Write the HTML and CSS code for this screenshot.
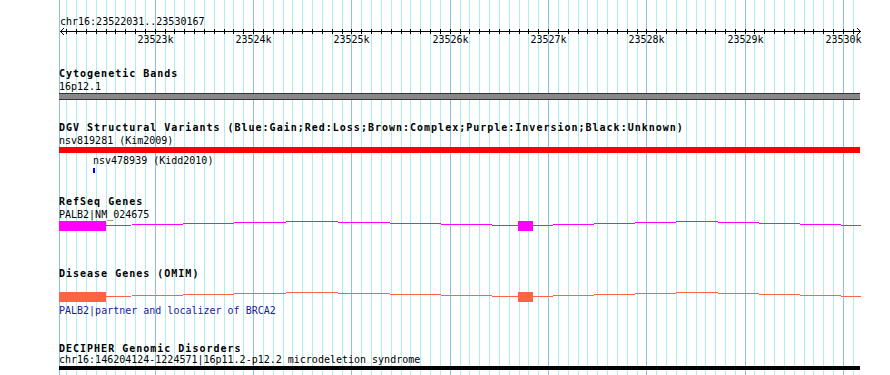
FILE: index.html
```html
<!DOCTYPE html>
<html lang="en">
<head>
<meta charset="UTF-8">
<title>chr16:23522031..23530167</title>
<link rel="stylesheet" href="styles.css">
</head>
<body>

<div class="panel">
    <!-- grid lines, drawn behind the tracks -->
    <svg id="grid" class="grid" width="890" height="375"></svg>

    <div class="tracks">
        <div class="seg-name">chr16:23522031..23530167</div>
        <svg id="ruler" class="ruler" width="831" height="20" viewBox="59 28 831 20"></svg>

        <div class="track cyto">
            <div class="track-title">Cytogenetic Bands</div>
            <div class="feat-label">16p12.1</div>
            <div class="band"></div>
        </div>

        <div class="track dgv">
            <div class="track-title">DGV Structural Variants (Blue:Gain;Red:Loss;Brown:Complex;Purple:Inversion;Black:Unknown)</div>
            <div class="feat-label">nsv819281 (Kim2009)</div>
            <div class="sv-loss"></div>
            <div class="feat-label sv-small-label">nsv478939 (Kidd2010)</div>
            <div class="sv-gain"></div>
        </div>

        <div class="track refseq">
            <div class="track-title">RefSeq Genes</div>
            <div class="feat-label">PALB2|NM_024675</div>
            <svg class="gene gene-refseq" width="803" height="14" viewBox="59 219 803 14">
                <rect x="59" y="221" width="47" height="10"/>
                <rect x="518" y="221" width="15" height="10"/>
                <polyline points="106,225.5 312,221.5 518,225.5"/>
                <polyline points="533,225.5 697,221.5 861,225.5"/>
            </svg>
        </div>

        <div class="track omim">
            <div class="track-title">Disease Genes (OMIM)</div>
            <svg class="gene gene-omim" width="803" height="14" viewBox="59 290 803 14">
                <rect x="59" y="292" width="47" height="10"/>
                <rect x="518" y="292" width="15" height="10"/>
                <polyline points="106,296.5 312,292.5 518,296.5"/>
                <polyline points="533,296.5 697,292.5 861,296.5"/>
            </svg>
            <div class="feat-desc">PALB2|partner and localizer of BRCA2</div>
        </div>

        <div class="track decipher">
            <div class="track-title">DECIPHER Genomic Disorders</div>
            <div class="feat-label">chr16:146204124-1224571|16p11.2-p12.2 microdeletion syndrome</div>
            <div class="cnv-bar"></div>
        </div>
    </div>
</div>

<script>
    const SEG_START = 23522031;
    const SEG_END = 23530167;
    const LEFT = 60;
    const SCALE = 800 / (SEG_END - SEG_START + 1); // px per bp
    const SVG_NS = "http://www.w3.org/2000/svg";

    function bpToX(bp) {
        return Math.floor(LEFT + (bp - SEG_START) * SCALE);
    }

    function addLine(parent, x1, y1, x2, y2, cls) {
        const line = document.createElementNS(SVG_NS, "line");
        line.setAttribute("x1", x1);
        line.setAttribute("y1", y1);
        line.setAttribute("x2", x2);
        line.setAttribute("y2", y2);
        if (cls) line.setAttribute("class", cls);
        parent.appendChild(line);
    }

    // background grid, one line per 100bp
    const grid = document.getElementById("grid");
    addLine(grid, 59.5, 0, 59.5, 375, "major");
    const firstBp = Math.ceil(SEG_START / 100) * 100;
    for (let bp = firstBp; bp <= SEG_END; bp += 100) {
        const x = bpToX(bp) + 0.5;
        addLine(grid, x, 0, x, 375, bp % 1000 === 0 ? "major" : "minor");
    }

    // ruler: axis, arrows, ticks and labels
    const ruler = document.getElementById("ruler");
    addLine(ruler, 60, 31.5, 861, 31.5);
    addLine(ruler, 60.5, 31.5, 64, 28);
    addLine(ruler, 60.5, 31.5, 64, 35);
    addLine(ruler, 860.5, 31.5, 857, 28);
    addLine(ruler, 860.5, 31.5, 857, 35);
    for (let bp = firstBp; bp <= SEG_END; bp += 100) {
        const x = bpToX(bp) + 0.5;
        addLine(ruler, x, 29, x, 34);
        if (bp % 1000 === 0) {
            const label = document.createElementNS(SVG_NS, "text");
            label.setAttribute("x", x);
            label.setAttribute("y", 43);
            label.textContent = `${bp / 1000}k`;
            ruler.appendChild(label);
        }
    }
</script>

</body>
</html>
```

FILE: styles.css
```css
/* page */
body {
    margin: 0;
    background: #fff;
}
.panel {
    position: relative;
    width: 890px;
    height: 375px;
    overflow: hidden;
    font-family: "DejaVu Sans Mono", "Liberation Mono", monospace;
    font-size: 10px;
    line-height: 13px;
    color: #000;
}

/* grid */
.grid {
    position: absolute;
    top: 0;
    left: 0;
}
.grid line {
    stroke-width: 1;
    shape-rendering: crispEdges;
}
.grid .minor {
    stroke: #afeeee;
}
.grid .major {
    stroke: #87c3e6;
}

/* tracks */
.tracks {
    position: relative;
    padding-top: 15px;
    padding-left: 59px;
}
.seg-name {
    padding-left: 1px;
}
.ruler {
    display: block;
}
.ruler line {
    stroke: #000;
    stroke-width: 1;
    shape-rendering: crispEdges;
}
.ruler text {
    font-family: "DejaVu Sans Mono", "Liberation Mono", monospace;
    font-size: 10px;
    text-anchor: middle;
    fill: #000;
}
.track-title {
    font-weight: bold;
    letter-spacing: 1px;
}

.cyto {
    margin-top: 19px;
}
.band {
    width: 801px;
    height: 5px;
    background: #888;
    border-top: 1px solid #333;
    border-bottom: 1px solid #333;
}

.dgv {
    margin-top: 21px;
}
.sv-loss {
    width: 801px;
    height: 6px;
    background: #f00;
}
.sv-small-label {
    margin-top: 1px;
    padding-left: 34px;
}
.sv-gain {
    width: 2px;
    height: 5px;
    margin-top: 1px;
    margin-left: 34px;
    background: #00f;
}

.refseq {
    margin-top: 22px;
}
.gene {
    display: block;
}
.gene polyline {
    fill: none;
    stroke-width: 1;
    shape-rendering: crispEdges;
}
.gene rect {
    shape-rendering: crispEdges;
}
.gene-refseq {
    margin-top: -2px;
}
.gene-refseq rect {
    fill: #f0f;
}
.gene-refseq polyline {
    stroke: #f0f;
}

.omim {
    margin-top: 34px;
}
.gene-omim {
    margin-top: 10px;
}
.gene-omim rect {
    fill: #ff6347;
}
.gene-omim polyline {
    stroke: #ff6347;
}
.feat-desc {
    color: #1a1a9e;
}

.decipher {
    margin-top: 25px;
}
.decipher .feat-label {
    margin-top: -2px;
}
.cnv-bar {
    width: 801px;
    height: 4px;
    background: #000;
}
```
